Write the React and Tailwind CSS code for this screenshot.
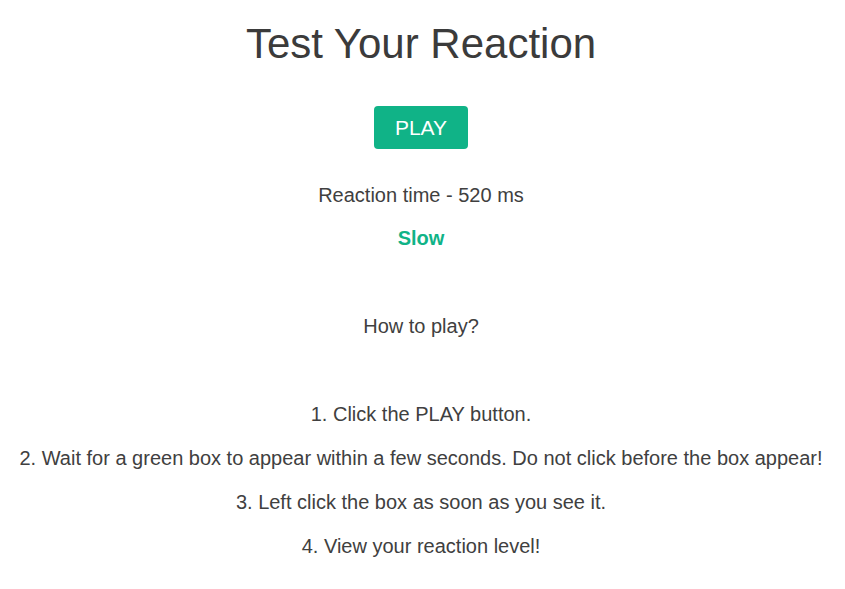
import React from 'react';

const steps = [
  '1. Click the PLAY button.',
  '2. Wait for a green box to appear within a few seconds. Do not click before the box appear!',
  '3. Left click the box as soon as you see it.',
  '4. View your reaction level!',
];

const App = () => {
  return (
    <div
      className="min-h-[589px] bg-white text-center text-[#404040] pt-[20px] pr-[3px]"
      style={{ fontFamily: '"Liberation Sans", Arial, sans-serif' }}
    >
      <h1 className="text-[42px] leading-[48px] font-normal text-[#3b3b3b]">Test Your Reaction</h1>

      <div className="mt-[38px] flex justify-center">
        <button className="h-[43px] w-[94px] rounded-[4px] bg-[#10b387] text-white text-[21px] leading-[24px]">
          PLAY
        </button>
      </div>

      {/* Result */}
      <p className="mt-[34px] text-[20px] leading-[24px]">Reaction time - 520 ms</p>
      <p className="mt-[19px] text-[20px] leading-[24px] font-bold text-[#10b387]">Slow</p>

      {/* Instructions */}
      <p className="mt-[64px] text-[20px] leading-[24px]">How to play?</p>
      <div className="mt-[64px] flex flex-col gap-[20px]">
        {steps.map((s) => (
          <p key={s} className="text-[20px] leading-[24px]">
            {s}
          </p>
        ))}
      </div>
    </div>
  );
};

export default App;
